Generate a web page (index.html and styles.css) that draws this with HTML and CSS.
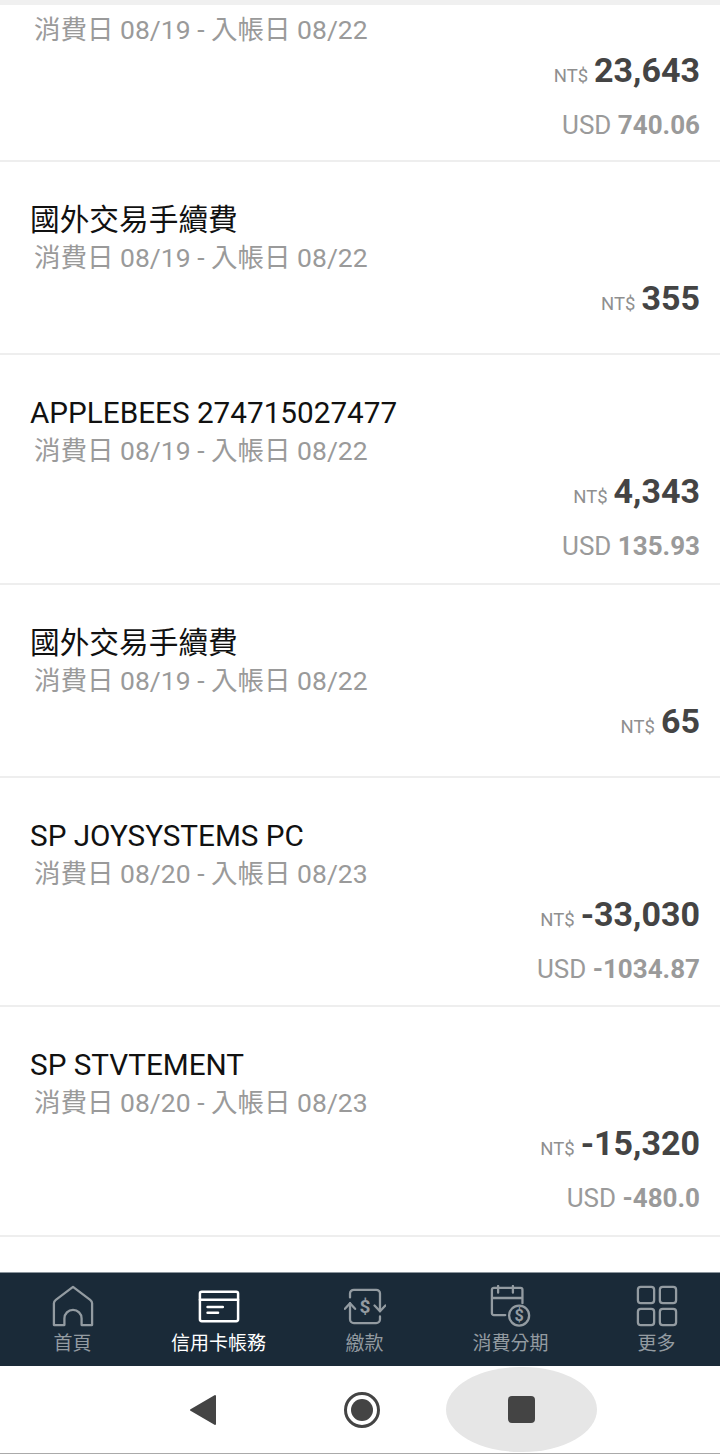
FILE: index.html
```html
<!DOCTYPE html>
<html lang="zh-TW">
<head>
    <meta charset="UTF-8">
    <meta name="viewport" content="width=device-width, initial-scale=1.0">
    <title>信用卡帳務</title>
    <link rel="stylesheet" href="styles.css">
</head>
<body>
    <div class="list">
        <div class="item first">
            <div class="date">消費日 08/19 - 入帳日 08/22</div>
            <div class="amount"><span class="cur">NT$</span><b>23,643</b></div>
            <div class="foreign">USD <b>740.06</b></div>
        </div>
        <div class="item short">
            <div class="name">國外交易手續費</div>
            <div class="date">消費日 08/19 - 入帳日 08/22</div>
            <div class="amount"><span class="cur">NT$</span><b>355</b></div>
        </div>
        <div class="item">
            <div class="name">APPLEBEES 274715027477</div>
            <div class="date">消費日 08/19 - 入帳日 08/22</div>
            <div class="amount"><span class="cur">NT$</span><b>4,343</b></div>
            <div class="foreign">USD <b>135.93</b></div>
        </div>
        <div class="item short">
            <div class="name">國外交易手續費</div>
            <div class="date">消費日 08/19 - 入帳日 08/22</div>
            <div class="amount"><span class="cur">NT$</span><b>65</b></div>
        </div>
        <div class="item">
            <div class="name">SP JOYSYSTEMS PC</div>
            <div class="date">消費日 08/20 - 入帳日 08/23</div>
            <div class="amount"><span class="cur">NT$</span><b>-33,030</b></div>
            <div class="foreign">USD <b>-1034.87</b></div>
        </div>
        <div class="item">
            <div class="name">SP STVTEMENT</div>
            <div class="date">消費日 08/20 - 入帳日 08/23</div>
            <div class="amount"><span class="cur">NT$</span><b>-15,320</b></div>
            <div class="foreign">USD <b>-480.0</b></div>
        </div>
    </div>

    <nav class="tabbar">
        <div class="tab">
            <svg class="tab-icon" viewBox="0 0 44 44" fill="none" stroke="currentColor" stroke-width="2.4" stroke-linejoin="round">
                <path d="M13 42H2V19q0-2 2-3.5L22 2l18 13.5q2 1.500 2 3.500V42H31v-7a9 9 0 0 0-18 0z"/>
            </svg>
            <span>首頁</span>
        </div>
        <div class="tab active">
            <svg class="tab-icon" viewBox="0 0 44 44" fill="none" stroke="currentColor" stroke-width="2.6" stroke-linecap="round">
                <rect x="2" y="7" width="40" height="31" rx="2"/>
                <path d="M2 15.500h40M10 23h16M10 29h11"/>
            </svg>
            <span>信用卡帳務</span>
        </div>
        <div class="tab">
            <svg class="tab-icon" viewBox="0 0 44 44" fill="none" stroke="currentColor" stroke-width="2.4" stroke-linecap="round" stroke-linejoin="round">
                <path d="M6.300 13V9a4 4 0 0 1 4-4h23.400a4 4 0 0 1 4 4v18.500"/>
                <path d="M6.300 19v17a4 4 0 0 0 4 4h23.400a4 4 0 0 0 4-4v-3"/>
                <path d="M1 25l5.300-6 5.300 6M32 21.500l5.700 6 5.700-6"/>
                <text x="22" y="29" class="dollar" text-anchor="middle">$</text>
            </svg>
            <span>繳款</span>
        </div>
        <div class="tab">
            <svg class="tab-icon" viewBox="0 0 44 44" fill="none" stroke="currentColor" stroke-width="2.4" stroke-linecap="round" stroke-linejoin="round">
                <path d="M16 31.500H4a2 2 0 0 1-2-2V5a2 2 0 0 1 2-2h28a2 2 0 0 1 2 2v14M2 13.600h32M8.500 1v7M24 1v7"/>
                <circle cx="30.500" cy="32" r="10.500"/>
                <text x="30.500" y="38" class="dollar small" text-anchor="middle">$</text>
            </svg>
            <span>消費分期</span>
        </div>
        <div class="tab">
            <svg class="tab-icon" viewBox="0 0 44 44" fill="none" stroke="currentColor" stroke-width="2.400">
                <rect x="2" y="2" width="17" height="17" rx="3"/>
                <rect x="25" y="2" width="17" height="17" rx="3"/>
                <rect x="2" y="25" width="17" height="17" rx="3"/>
                <rect x="25" y="25" width="17" height="17" rx="3"/>
            </svg>
            <span>更多</span>
        </div>
    </nav>

    <div class="sysbar">
        <div class="sys-btn">
            <svg width="28" height="32" viewBox="0 0 28 32"><path d="M26 2v28L2 16z" fill="#444" stroke="#444" stroke-width="2" stroke-linejoin="round"/></svg>
        </div>
        <div class="sys-btn">
            <svg width="38" height="38" viewBox="0 0 38 38"><circle cx="19" cy="19" r="16.500" fill="none" stroke="#444" stroke-width="3"/><circle cx="19" cy="19" r="11" fill="#444"/></svg>
        </div>
        <div class="sys-btn pressed">
            <div class="square"></div>
        </div>
    </div>
</body>
</html>
```
FILE: styles.css
```css
html, body {
    margin: 0;
    height: 100%;
}
body {
    width: 720px;
    height: 1454px;
    overflow: hidden;
    background-color: #fff;
    display: flex;
    flex-direction: column;
    font-family: Roboto, "Noto Sans CJK TC", sans-serif;
}
.list {
    height: 1272px;
    flex: none;
    overflow: hidden;
    border-top: 5px solid #f0f0f0;
    box-sizing: border-box;
}
.item {
    border-bottom: 2px solid #eeeeee;
    padding: 37px 20px 0 30px;
    box-sizing: border-box;
    height: 229.500px;
}
.item.short {
    height: 193px;
}
.item.first {
    height: 157px;
    padding-top: 8px;
}
.name {
    font-size: 29.700px;
    line-height: 42px;
    color: #111;
}
.date {
    font-size: 26.500px;
    line-height: 34px;
    color: #9a9a9a;
    padding-left: 4px;
}
.amount {
    text-align: right;
    color: #444;
    line-height: 44px;
    margin-top: 1px;
}
.amount b {
    font-size: 34px;
    font-weight: 700;
}
.cur {
    font-size: 18.500px;
    color: #8f8f8f;
    margin-right: 6px;
}
.foreign {
    text-align: right;
    font-size: 26px;
    line-height: 34px;
    margin-top: 9px;
    color: #9a9a9a;
}
.foreign b {
    font-weight: 700;
}
.tabbar {
    height: 94px;
    flex: none;
    background-color: #1a2a38;
    display: grid;
    grid-template-columns: repeat(5, 126px);
    column-gap: 20px;
    box-sizing: border-box;
    padding: 12px 0 0 9.500px;
    border-top: 1px solid #8a949c;
}
.tab {
    display: flex;
    flex-direction: column;
    align-items: center;
    color: #939ba1;
    font-size: 19px;
    line-height: 24px;
}
.tab.active {
    color: #fff;
}
.tab-icon {
    width: 42px;
    height: 42px;
    margin-bottom: 5px;
}
.dollar {
    font-size: 20px;
    font-weight: 700;
    fill: currentColor;
    stroke: none;
}
.dollar.small {
    font-size: 17px;
}
.sysbar {
    flex: 1;
    display: flex;
    gap: 8px;
    padding: 1px 0 1px 127.500px;
    border-bottom: 1px solid #aaa;
}
.sys-btn {
    flex: none;
    width: 151px;
    display: flex;
    align-items: center;
    justify-content: center;
}
.pressed {
    background-color: #e6e6e6;
    border-radius: 75px / 43px;
}
.square {
    width: 27px;
    height: 27px;
    border-radius: 4px;
    background-color: #444;
}
```
